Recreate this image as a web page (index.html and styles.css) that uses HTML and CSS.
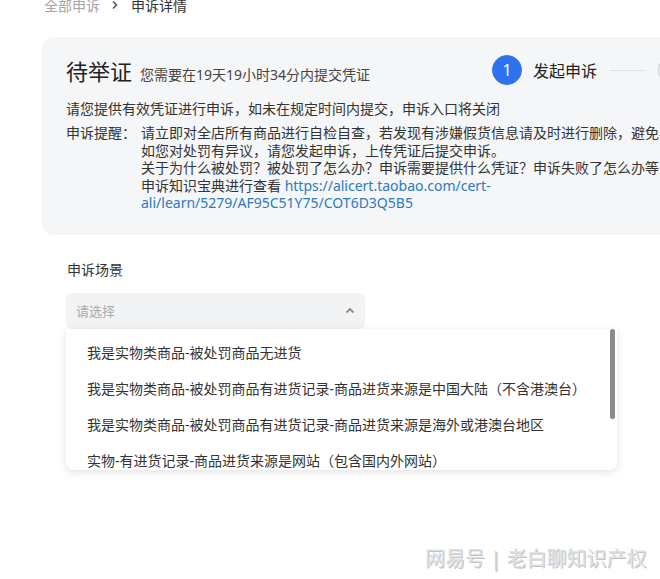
FILE: index.html
```
<!DOCTYPE html>
<html lang="zh-CN">
<head>
    <meta charset="UTF-8">
    <meta name="viewport" content="width=device-width, initial-scale=1.0">
    <title>申诉详情</title>
    <link rel="stylesheet" href="styles.css">
</head>
<body>
    <div class="page">
        <div class="crumbs">
            <a href="javascript:;" class="crumb-link">全部申诉</a>
            <svg class="crumb-sep" width="8" height="10" viewBox="0 0 8 10"><path d="M2 1.5 L5.5 5 L2 8.5" fill="none" stroke="#555" stroke-width="1.6"/></svg>
            <span class="crumb-now">申诉详情</span>
        </div>

        <div class="card">
            <div class="card-head">
                <div class="status">
                    <span class="status-title">待举证</span>
                    <span class="status-tip">您需要在19天19小时34分内提交凭证</span>
                </div>
                <div class="steps">
                    <div class="step active"><span class="step-no">1</span><span class="step-name">发起申诉</span></div>
                    <span class="step-line"></span>
                    <div class="step"><span class="step-no">2</span><span class="step-name">上传凭证</span></div>
                </div>
            </div>
            <p class="card-lead">请您提供有效凭证进行申诉，如未在规定时间内提交，申诉入口将关闭</p>
            <div class="notice">
                <span class="notice-label">申诉提醒：</span>
                <div class="notice-body">
                    <div>请立即对全店所有商品进行自检自查，若发现有涉嫌假货信息请及时进行删除，避免再次被处罚。</div>
                    <div>如您对处罚有异议，请您发起申诉，上传凭证后提交申诉。</div>
                    <div>关于为什么被处罚？被处罚了怎么办？申诉需要提供什么凭证？申诉失败了怎么办等问题，可前往</div>
                    <div>申诉知识宝典进行查看 <a href="javascript:;" class="link">https://alicert.taobao.com/cert-<br>ali/learn/5279/AF95C51Y75/COT6D3Q5B5</a></div>
                </div>
            </div>
        </div>

        <div class="form">
            <div class="form-label">申诉场景</div>
            <div class="select-wrap">
                <div class="select">
                    <span class="select-ph">请选择</span>
                    <svg width="10" height="7" viewBox="0 0 10 7"><path d="M1.5 5.5 L5 2 L8.5 5.5" fill="none" stroke="#8c8c8c" stroke-width="1.8"/></svg>
                </div>
                <div class="dropdown">
                    <ul class="options">
                        <li>我是实物类商品-被处罚商品无进货</li>
                        <li>我是实物类商品-被处罚商品有进货记录-商品进货来源是中国大陆（不含港澳台）</li>
                        <li>我是实物类商品-被处罚商品有进货记录-商品进货来源是海外或港澳台地区</li>
                        <li>实物-有进货记录-商品进货来源是网站（包含国内外网站）</li>
                        <li>我是虚拟类商品</li>
                    </ul>
                    <span class="scroll-thumb"></span>
                </div>
            </div>
        </div>

        <div class="watermark">网易号 <span class="wm-bar">|</span> 老白聊知识产权</div>
    </div>
</body>
</html>
```

FILE: styles.css
```
html, body {
    margin: 0;
    padding: 0;
    background-color: #fff;
    overflow: hidden;
}
body {
    font-family: "Noto Sans", "Noto Sans CJK SC", sans-serif;
    color: #333;
    font-size: 14px;
}
.page {
    position: relative;
    width: 660px;
    height: 579px;
    padding-left: 42px;
    box-sizing: border-box;
    overflow: hidden;
}
.crumbs {
    display: flex;
    align-items: center;
    height: 20px;
    margin-top: -5px;
    padding-left: 2px;
    font-size: 14px;
}
.crumb-link {
    color: #a6a6a6;
    text-decoration: none;
}
.crumb-sep {
    margin: 0 12px 0 11px;
}
.crumb-now {
    color: #333;
}
.card {
    width: 900px;
    margin-top: 22px;
    padding: 18px 24px 23px;
    background-color: #f5f6f8;
    border-radius: 12px;
    box-sizing: border-box;
}
.card-head {
    display: flex;
    align-items: center;
    height: 30px;
}
.status {
    flex: 0 0 426px;
    display: flex;
    align-items: baseline;
    white-space: nowrap;
}
.status-title {
    font-size: 22px;
    color: #222;
    margin-right: 8px;
}
.status-tip {
    font-size: 14px;
    color: #444;
}
.steps {
    display: flex;
    align-items: center;
    flex-shrink: 0;
}
.step {
    display: flex;
    align-items: center;
    flex-shrink: 0;
}
.step-no {
    width: 30px;
    height: 30px;
    border-radius: 50%;
    border: 1px solid #c8ccd4;
    box-sizing: border-box;
    color: #999;
    font-size: 16px;
    display: flex;
    align-items: center;
    justify-content: center;
}
.step.active .step-no {
    background-color: #2f72ee;
    border-color: #2f72ee;
    color: #fff;
}
.step-name {
    margin-left: 11px;
    font-size: 16px;
    color: #222;
    white-space: nowrap;
}
.step-line {
    width: 35px;
    height: 1px;
    background-color: #dcdfe4;
    margin: 0 13px;
    flex-shrink: 0;
}
.card-lead {
    margin: 15px 0 0;
    line-height: 18px;
    white-space: nowrap;
}
.notice {
    display: flex;
    margin-top: 6px;
    line-height: 17.6px;
    white-space: nowrap;
}
.notice-label {
    flex: 0 0 75px;
}
.link {
    color: #2b7bbd;
    text-decoration: none;
}
.form {
    padding-left: 25px;
    margin-top: 25px;
}
.form-label {
    line-height: 20px;
    color: #333;
}
.select-wrap {
    position: relative;
    margin-top: 13px;
}
.select {
    width: 299px;
    height: 36px;
    margin-left: -1px;
    padding: 0 10px;
    box-sizing: border-box;
    background-color: #f2f3f5;
    border-radius: 6px;
    display: flex;
    align-items: center;
    justify-content: space-between;
}
.select-ph {
    font-size: 13px;
    color: #aaa;
}
.dropdown {
    position: absolute;
    top: 36px;
    left: -1px;
    width: 551px;
    height: 141px;
    background-color: #fff;
    border-radius: 0 0 8px 8px;
    box-shadow: 0 2px 8px rgba(0, 0, 0, 0.12);
    overflow: hidden;
}
.options {
    margin: 0;
    padding: 6px 0 0;
    list-style: none;
}
.options li {
    height: 36px;
    line-height: 36px;
    padding-left: 21px;
    color: #333;
    white-space: nowrap;
}
.scroll-thumb {
    position: absolute;
    top: 0;
    right: 2px;
    width: 5px;
    height: 90px;
    border-radius: 3px;
    background-color: #8a8a8a;
}
.watermark {
    position: absolute;
    left: 425px;
    top: 543px;
    font-size: 20px;
    color: #e2e2e2;
    text-shadow: 1px 1px 0 #c2c2c2;
    white-space: nowrap;
}
.wm-bar {
    color: #d6d6d6;
}
```
